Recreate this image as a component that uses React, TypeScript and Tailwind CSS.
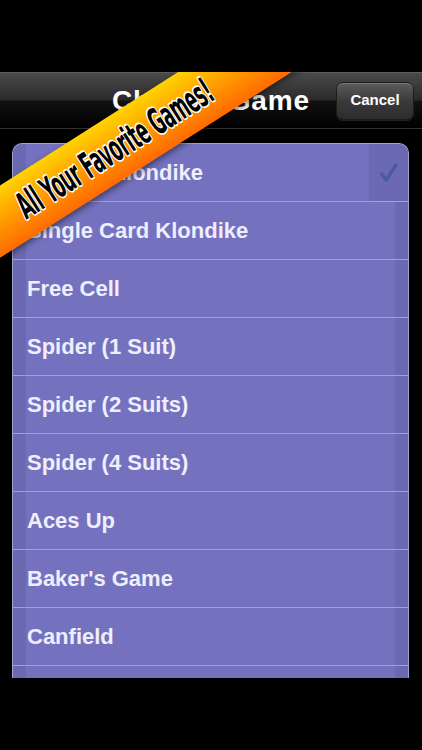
import React from "react";

const GAMES = [
  "Classic Klondike",
  "Single Card Klondike",
  "Free Cell",
  "Spider (1 Suit)",
  "Spider (2 Suits)",
  "Spider (4 Suits)",
  "Aces Up",
  "Baker's Game",
  "Canfield",
  "Clock",
];

const SELECTED = 0;

function CheckMark() {
  return (
    <svg width="18" height="19" viewBox="0 0 18 19" aria-hidden="true">
      <path
        d="M1.8 11 L6.3 16.8 L16 2"
        fill="none"
        stroke="#4a5a9f"
        strokeWidth="3.6"
        strokeLinecap="round"
        strokeLinejoin="round"
      />
    </svg>
  );
}

function GameRow({ name, selected }: { name: string; selected: boolean }) {
  return (
    <div className="flex h-[58px] shrink-0 border-b border-[#a3a2cc]">
      <div className="w-[13px] shrink-0 bg-[#6b69b2]" />
      <div className="flex flex-1 items-center pl-[1px] text-[22px] font-bold text-[#eeeefc]">
        {name}
      </div>
      {selected ? (
        <div className="flex w-[39px] shrink-0 items-center justify-center bg-[#6b69b2] pl-[1px]">
          <CheckMark />
        </div>
      ) : (
        <div className="w-[13px] shrink-0 bg-[#6b69b2]" />
      )}
    </div>
  );
}

export default function App() {
  return (
    <div className="relative h-[750px] w-[422px] overflow-hidden bg-black font-['Liberation_Sans',Arial,sans-serif]">
      <div className="h-[72px]" />

      <header className="grid h-[57px] grid-cols-[1fr_auto_1fr] items-center border-y border-t-[#5e5e5e] border-b-[#333] bg-[linear-gradient(#4a4a4a_0%,#2b2b2b_48%,#111_52%,#000_100%)]">
        <div />
        <h1 className="text-[28px] font-bold tracking-[0.9px] text-white">
          Choose Game
        </h1>
        <div className="flex justify-end pr-[8px]">
          <button
            type="button"
            className="h-[38px] w-[78px] rounded-[7px] border border-[#1c1c1c] bg-[linear-gradient(#5c5c5c,#3a3a3a_50%,#2c2c2c)] text-[15px] font-bold text-white shadow-[inset_0_1px_0_rgba(255,255,255,0.2),0_1px_0_rgba(255,255,255,0.12)]"
          >
            Cancel
          </button>
        </div>
      </header>

      <div className="mx-[12px] mt-[14px] flex h-[535px] w-[397px] flex-col overflow-hidden rounded-t-[10px] border-x border-t border-[#a3a2cc] bg-[#7472bf]">
        {GAMES.map((g, i) => (
          <GameRow key={g} name={g} selected={i === SELECTED} />
        ))}
      </div>

      {/* corner ribbon */}
      <div className="pointer-events-none absolute inset-x-0 top-[72px] bottom-0 overflow-hidden">
        <div className="absolute left-[-142px] top-[44px] flex h-[61px] w-[520px] rotate-[-32.5deg] items-center justify-center bg-[linear-gradient(#ffd400_0%,#ffa200_45%,#ff6a00_100%)] shadow-[0_3px_6px_rgba(0,0,0,0.45)]">
          <span className="inline-block translate-x-[-4px] scale-x-[0.6] scale-y-[1.18] whitespace-nowrap font-['DejaVu_Sans_Condensed','DejaVu_Sans',sans-serif] text-[31px] font-bold tracking-[-0.5px] text-black [text-shadow:1.5px_0_0_#fff,-1.5px_0_0_#fff,0_1.5px_0_#fff,0_-1.5px_0_#fff,1px_1px_0_#fff,-1px_-1px_0_#fff,1px_-1px_0_#fff,-1px_1px_0_#fff]">
            All Your Favorite Games!
          </span>
        </div>
      </div>
    </div>
  );
}
